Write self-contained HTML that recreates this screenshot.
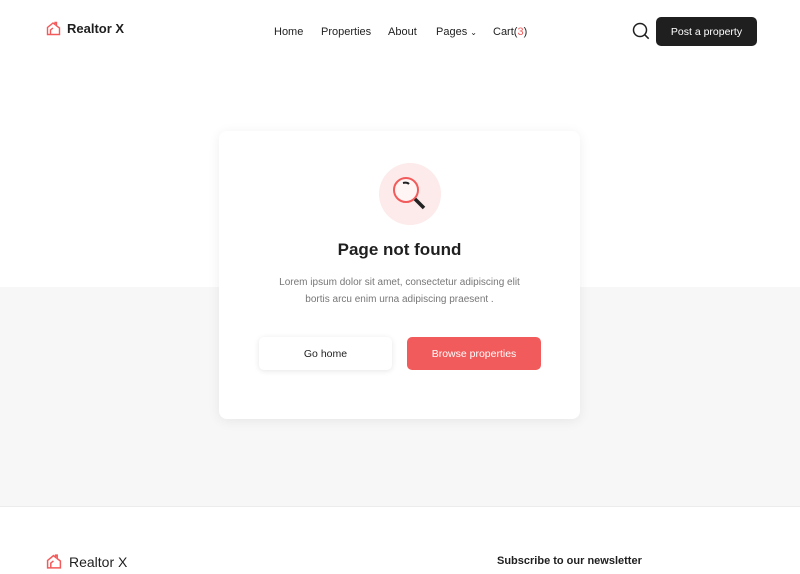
<!DOCTYPE html>
<html><head><style>
*{margin:0;padding:0;box-sizing:border-box}
body{width:800px;height:574px;overflow:hidden;background:#fff;font-family:"Liberation Sans",sans-serif;color:#1f1f1f;position:relative}
.gray{position:absolute;left:0;top:287px;width:800px;height:220px;background:#f7f7f7;border-bottom:1px solid #ececec}
.logo{position:absolute;display:flex;align-items:center;font-weight:bold}
nav{position:absolute;top:26px;left:274px;font-size:11px;color:#222}
nav span{position:absolute;white-space:nowrap}
.btn{position:absolute;left:656px;top:17px;width:101px;height:29px;background:#1f1f1f;color:#fff;border-radius:5px;font-size:10.5px;text-align:center;line-height:30px}
.card{position:absolute;left:219px;top:131px;width:361px;height:288px;background:#fff;border-radius:8px;box-shadow:0 2px 12px rgba(0,0,0,.07);text-align:center}
.b{position:absolute;top:206px;height:33px;border-radius:5px;font-size:10.5px;line-height:34px;text-align:center}
</style></head><body>
<div class="gray"></div>
<div class="logo" style="left:46px;top:21px;font-size:13px"><svg width="15" height="15" viewBox="0 0 15 15" fill="none" stroke="#f25b5b" stroke-width="1.4"><path d="M1.5 13.5V6.5L7 2l2 1.6V1.5h1.5v3.3L13.5 7v6.5z"/><path d="M4.5 13.5V9l2.5-2"/></svg><span style="margin-left:6px">Realtor X</span></div>
<nav><span style="left:0">Home</span><span style="left:47px">Properties</span><span style="left:114px">About</span><span style="left:162px">Pages <small style="font-size:8px">⌄</small></span><span style="left:219px">Cart(<b style="color:#f25b5b;font-weight:normal">3</b>)</span></nav>
<svg style="position:absolute;left:632px;top:22px" width="18" height="18" viewBox="0 0 18 18" fill="none" stroke="#1f1f1f" stroke-width="1.5"><circle cx="8" cy="8" r="6.5"/><path d="M12.7 12.7l4 4"/></svg>
<div class="btn">Post a property</div>
<div class="card">
<div style="position:absolute;left:160px;top:32px;width:62px;height:62px;border-radius:50%;background:#fdeaea"></div>
<svg style="position:absolute;left:172px;top:44px" width="40" height="40" viewBox="0 0 40 40" fill="none"><circle cx="15" cy="15" r="12" stroke="#f25b5b" stroke-width="2" fill="#fff5f5"/><path d="M12 8q4-1 6 1" stroke="#222" stroke-width="2"/><path d="M24 24l9 9" stroke="#222" stroke-width="3.5"/></svg>
<div style="position:absolute;top:109px;width:100%;font-size:17px;font-weight:bold">Page not found</div>
<div style="position:absolute;top:143px;width:100%;font-size:10px;line-height:17px;color:#777">Lorem ipsum dolor sit amet, consectetur adipiscing elit<br>bortis arcu enim urna adipiscing praesent .</div>
<div class="b" style="left:40px;width:133px;background:#fff;box-shadow:0 1px 6px rgba(0,0,0,.1)">Go home</div>
<div class="b" style="left:188px;width:134px;background:#f25b5b;color:#fff">Browse properties</div>
</div>
<div class="logo" style="left:46px;top:553px;font-size:14px;font-weight:normal"><svg width="16" height="17" viewBox="0 0 15 15" fill="none" stroke="#f25b5b" stroke-width="1.4"><path d="M1.5 13.5V6.5L7 2l2 1.6V1.5h1.5v3.3L13.5 7v6.5z"/><path d="M4.5 13.5V9l2.5-2"/></svg><span style="margin-left:7px">Realtor X</span></div>
<div style="position:absolute;left:497px;top:555px;font-size:11px;font-weight:bold">Subscribe to our newsletter</div>
</body></html>
